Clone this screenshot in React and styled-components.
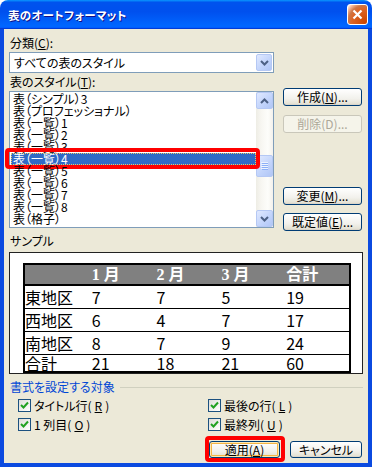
import React from "react";
import styled, { createGlobalStyle } from "styled-components";

const GlobalStyle = createGlobalStyle`
  html, body {
    margin: 0;
    padding: 0;
    background: #fff;
  }
  body {
    font-family: "Noto Sans CJK JP", "Noto Sans", sans-serif;
  }
`;

const Window = styled.div`
  width: 372px;
  height: 467px;
  display: flex;
  flex-direction: column;
  font-family: "Noto Sans CJK JP", "Noto Sans", sans-serif;
  font-size: 12px;
  font-feature-settings: "palt" 1;
  color: #000;
`;

const TitleBar = styled.div`
  height: 29px;
  flex: none;
  display: flex;
  align-items: center;
  justify-content: space-between;
  padding: 0 4px 0 8px;
  box-sizing: border-box;
  border-radius: 8px 8px 0 0;
  background: linear-gradient(
    180deg,
    #0997ff,
    #0053ee 8%,
    #0050ee 40%,
    #0066ff 88%,
    #0066ff 93%,
    #005bff 95%,
    #003dd7 96%,
    #003dd7
  );
`;

const Title = styled.span`
  color: #fff;
  font-weight: bold;
  font-size: 11.5px;
  letter-spacing: 0.3px;
  text-shadow: 1px 1px #0f1089;
`;

const CloseButton = styled.div`
  width: 21px;
  height: 21px;
  box-sizing: border-box;
  border: 1px solid #fff;
  border-radius: 3px;
  display: flex;
  align-items: center;
  justify-content: center;
  background: radial-gradient(
    circle at 90% 90%,
    #cc4600 0%,
    #dc6527 55%,
    #cd7546 70%,
    #ffccb2 90%,
    #fff 100%
  );
`;

const Body = styled.div`
  flex: 1;
  display: flex;
  flex-direction: column;
  background: #ece9d8;
  border: 4px solid #0b4ae0;
  border-top: 0;
  padding: 0 5px;
`;

const Label = styled.div`
  line-height: 12px;
  height: 12px;
  margin-top: ${(p) => p.$top}px;
  padding-left: 1px;
  white-space: nowrap;
`;

const Combo = styled.div`
  margin-top: 3px;
  width: 265px;
  height: 21px;
  box-sizing: border-box;
  border: 1px solid #7f9db9;
  background: #fff;
  display: flex;
  align-items: center;
  justify-content: space-between;
  padding: 1px;
`;

const ComboText = styled.span`
  padding-left: 3px;
  line-height: 12px;
`;

const ArrowButton = styled.div`
  width: ${(p) => p.$w || 17}px;
  height: 17px;
  flex: none;
  box-sizing: border-box;
  border: 1px solid #b5c8f4;
  border-radius: 2px;
  background: linear-gradient(135deg, #e0e9ff, #c1d3fb 60%, #b0c6f6);
  display: flex;
  align-items: center;
  justify-content: center;
`;

const StyleRow = styled.div`
  display: flex;
  align-items: flex-start;
  gap: 9px;
`;

const ListBox = styled.div`
  margin-top: 3px;
  width: 265px;
  height: 137px;
  box-sizing: border-box;
  border: 1px solid #7f9db9;
  background: #fff;
  display: flex;
`;

const Items = styled.div`
  flex: 1;
  padding-top: 1px;
  position: relative;
  z-index: 2;
`;

const Item = styled.div`
  position: relative;
  height: 12px;
  line-height: 12px;
  margin-left: 1px;
  padding-left: 2px;
  white-space: nowrap;
  color: ${(p) => (p.$selected ? "#fff" : "#000")};
  background: ${(p) => (p.$selected ? "#316ac5" : "transparent")};
  outline: ${(p) => (p.$selected ? "1px dotted #e8c86a" : "none")};
  outline-offset: -1px;

  ${(p) =>
    p.$selected &&
    `
    &::after {
      content: "";
      position: absolute;
      left: -6px;
      right: -4px;
      top: -5px;
      bottom: -4px;
      border: 4px solid #ff0000;
      border-radius: 4px;
    }
  `}
`;

const ScrollBar = styled.div`
  width: 17px;
  flex: none;
  display: flex;
  flex-direction: column;
  background: linear-gradient(90deg, #eeede5, #f7f6f1 30%, #fdfdfa 70%, #f3f1ec);
`;

const Track = styled.div`
  flex: 1;
`;

const Thumb = styled(ArrowButton)`
  margin-top: 46px;
  height: 22px;
`;

const ButtonColumn = styled.div`
  display: flex;
  flex-direction: column;
`;

const Button = styled.button`
  position: relative;
  width: ${(p) => p.$w || 79}px;
  height: ${(p) => p.$h || 18}px;
  margin-top: ${(p) => p.$top || 0}px;
  box-sizing: border-box;
  padding: 0;
  border: 1px solid ${(p) => (p.disabled ? "#c9c7ba" : "#003c74")};
  border-radius: 3px;
  background: ${(p) =>
    p.disabled
      ? "#f5f4ea"
      : "linear-gradient(180deg, #ffffff, #f2f1ec 60%, #e6e3d6 90%, #d6d0c5)"};
  color: ${(p) => (p.disabled ? "#aca899" : "#000")};
  font-family: inherit;
  font-size: 12px;
  font-feature-settings: "palt" 1;
  line-height: 12px;
  box-shadow: ${(p) =>
    p.$default ? "inset 0 0 0 1px #fde9b5, inset 0 0 0 2px #f4b545" : "none"};

  ${(p) =>
    p.$marked &&
    `
    &::after {
      content: "";
      position: absolute;
      left: -5px;
      right: -6px;
      top: -6px;
      bottom: -5px;
      border: 4px solid #ff0000;
      border-radius: 4px;
    }
  `}
`;

const SampleBox = styled.div`
  margin-top: 5px;
  height: 122px;
  width: 354px;
  box-sizing: border-box;
  border: 1px solid #222;
  background: #fff;
  padding: 10px 11px 0 13px;
  overflow: hidden;
`;

const Table = styled.div`
  border: 2px solid #000;
  border-bottom-width: 2px;
`;

const TRow = styled.div`
  display: grid;
  grid-template-columns: repeat(5, 1fr);
  height: ${(p) => p.$h}px;
  line-height: ${(p) => p.$h}px;
  border-bottom: ${(p) => p.$line}px solid #000;
  background: ${(p) => (p.$head ? "#808080" : "#fff")};
  color: ${(p) => (p.$head ? "#fff" : "#000")};
  font-size: 16px;
  font-weight: ${(p) => (p.$head ? "bold" : "normal")};
  font-family: ${(p) =>
    p.$head
      ? `"Liberation Serif", "Noto Sans CJK JP", serif`
      : `"Noto Sans CJK JP", sans-serif`};
  font-feature-settings: normal;
`;

const Cell = styled.div`
  padding-left: ${(p) => (p.$first ? 0 : 2)}px;
  white-space: nowrap;
`;

const GroupHeader = styled.div`
  margin-top: 7px;
  display: flex;
  align-items: center;
  gap: 5px;
  color: #0046d5;
  line-height: 12px;
  height: 12px;
  padding-left: 1px;

  &::after {
    content: "";
    flex: 1;
    height: 1px;
    background: #d0d0bf;
  }
`;

const CheckGrid = styled.div`
  margin-top: 6px;
  padding-left: 9px;
  display: grid;
  grid-template-columns: 190px 1fr;
  row-gap: 6px;
`;

const CheckItem = styled.label`
  display: flex;
  align-items: center;
  gap: 3px;
  height: 13px;
  line-height: 13px;
  white-space: nowrap;
`;

const Box = styled.span`
  width: 13px;
  height: 13px;
  box-sizing: border-box;
  border: 1px solid #1c5180;
  background: linear-gradient(135deg, #dcdcd7, #fff);
  display: flex;
  align-items: center;
  justify-content: center;
  flex: none;
`;

const Footer = styled.div`
  margin-top: 10px;
  display: flex;
  justify-content: flex-end;
  gap: 10px;
  padding-right: 1px;
`;

const Chevron = ({ up }) => (
  <svg width="9" height="6" viewBox="0 0 9 6">
    <path
      d={up ? "M1 5 L4.5 1.5 L8 5" : "M1 1 L4.5 4.5 L8 1"}
      fill="none"
      stroke="#4d6185"
      strokeWidth="2"
    />
  </svg>
);

const Grip = () => (
  <svg width="7" height="8" viewBox="0 0 7 8">
    {[0, 2, 4, 6].map((y) => (
      <g key={y}>
        <rect x="0" y={y} width="7" height="1" fill="#eef4fe" />
        <rect x="1" y={y + 1} width="6" height="1" fill="#8cb0f8" />
      </g>
    ))}
  </svg>
);

const Check = () => (
  <svg width="9" height="9" viewBox="0 0 9 9">
    <path
      d="M1 4 L3.5 6.5 L8 1.5"
      fill="none"
      stroke="#21a121"
      strokeWidth="2"
    />
  </svg>
);

const items = [
  "表（シンプル）3",
  "表（プロフェッショナル）",
  "表（一覧）1",
  "表（一覧）2",
  "表（一覧）3",
  "表（一覧）4",
  "表（一覧）5",
  "表（一覧）6",
  "表（一覧）7",
  "表（一覧）8",
  "表（格子）",
];

const rows = [
  ["東地区", "7", "7", "5", "19"],
  ["西地区", "6", "4", "7", "17"],
  ["南地区", "8", "7", "9", "24"],
];

export default function App() {
  return (
    <>
      <GlobalStyle />
      <Window>
        <TitleBar>
          <Title>表のオートフォーマット</Title>
          <CloseButton>
            <svg width="11" height="11" viewBox="0 0 11 11">
              <path
                d="M1.5 1.5 L9.5 9.5 M9.5 1.5 L1.5 9.5"
                stroke="#fff"
                strokeWidth="2.2"
              />
            </svg>
          </CloseButton>
        </TitleBar>
        <Body>
          <Label $top={8}>
            分類(<u>C</u>):
          </Label>
          <Combo>
            <ComboText>すべての表のスタイル</ComboText>
            <ArrowButton $w={16}>
              <Chevron />
            </ArrowButton>
          </Combo>
          <Label $top={3}>
            表のスタイル(<u>T</u>):
          </Label>
          <StyleRow>
            <ListBox>
              <Items>
                {items.map((t, i) => (
                  <Item key={t} $selected={i === 5}>
                    {t}
                  </Item>
                ))}
              </Items>
              <ScrollBar>
                <ArrowButton>
                  <Chevron up />
                </ArrowButton>
                <Track>
                  <Thumb>
                    <Grip />
                  </Thumb>
                </Track>
                <ArrowButton>
                  <Chevron />
                </ArrowButton>
              </ScrollBar>
            </ListBox>
            <ButtonColumn>
              <Button>
                作成(<u>N</u>)...
              </Button>
              <Button $top={9} disabled>
                削除(D)...
              </Button>
              <Button $top={54}>
                変更(<u>M</u>)...
              </Button>
              <Button $top={8}>
                既定値(<u>E</u>)...
              </Button>
            </ButtonColumn>
          </StyleRow>
          <Label $top={4}>サンプル</Label>
          <SampleBox>
            <Table>
              <TRow $head $h={19} $line={2}>
                <Cell $first />
                <Cell>1 月</Cell>
                <Cell>2 月</Cell>
                <Cell>3 月</Cell>
                <Cell>合計</Cell>
              </TRow>
              {rows.map((r) => (
                <TRow key={r[0]} $h={22} $line={1}>
                  {r.map((c, i) => (
                    <Cell key={i} $first={i === 0}>
                      {c}
                    </Cell>
                  ))}
                </TRow>
              ))}
              <TRow $h={16} $line={0}>
                {["合計", "21", "18", "21", "60"].map((c, i) => (
                  <Cell key={i} $first={i === 0}>
                    {c}
                  </Cell>
                ))}
              </TRow>
            </Table>
          </SampleBox>
          <GroupHeader>書式を設定する対象</GroupHeader>
          <CheckGrid>
            <CheckItem>
              <Box>
                <Check />
              </Box>
              タイトル行(<u>R</u>)
            </CheckItem>
            <CheckItem>
              <Box>
                <Check />
              </Box>
              最後の行(<u>L</u>)
            </CheckItem>
            <CheckItem>
              <Box>
                <Check />
              </Box>
              1 列目(<u>O</u>)
            </CheckItem>
            <CheckItem>
              <Box>
                <Check />
              </Box>
              最終列(<u>U</u>)
            </CheckItem>
          </CheckGrid>
          <Footer>
            <Button $w={71} $h={17} $default $marked>
              適用(<u>A</u>)
            </Button>
            <Button $w={72} $h={17}>
              キャンセル
            </Button>
          </Footer>
        </Body>
      </Window>
    </>
  );
}
